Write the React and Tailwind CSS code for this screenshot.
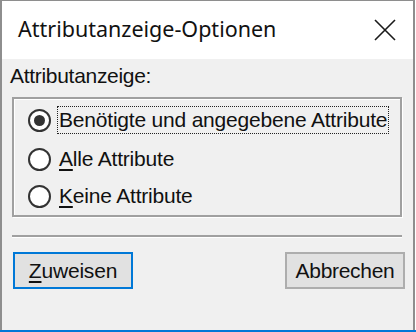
export default function App() {
  return (
    <div className="w-[416px] h-[332px] bg-white flex flex-col" style={{ fontFamily: '"Liberation Sans", Arial, sans-serif' }}>
      <div className="w-[415px] h-[330px] border-l-2 border-r-2 border-t border-[#8e8e8e] flex flex-col">
        {/* Title bar */}
        <div className="h-[58px] bg-white flex items-center justify-between pl-[16px] pr-[16px]">
          <span className="text-[21.5px] text-[#111] pb-[2px]" style={{ fontFamily: '"Noto Sans", "Open Sans", sans-serif' }}>
            Attributanzeige-Optionen
          </span>
          <svg width="22" height="22" viewBox="0 0 22 22" className="mr-[1px] mb-[1px]">
            <path d="M1 1 L21 21 M21 1 L1 21" stroke="#1a1a1a" strokeWidth="1.6" />
          </svg>
        </div>

        {/* Content */}
        <div className="flex-1 bg-[#f0f0f0] flex flex-col pl-[8px] pr-[8px]">
          <div className="mt-[6px] text-[21px] leading-[22px] text-[#111] tracking-[-0.3px]">Attributanzeige:</div>

          <div className="ml-[2px] mt-[10px] w-[390px] h-[120px] border-2 border-[#a0a0a0] shadow-[inset_1px_1px_0_#fff,1px_1px_0_#fff] flex flex-col pl-[14px]">
            <div className="flex items-center h-[30px] mt-[6px]">
              <Radio checked />
              <span className="ml-[6px] px-[1px] border border-dotted border-[#222] text-[21px] leading-[26px] text-[#111] tracking-[-0.2px]">
                Benötigte und angegebene Attribute
              </span>
            </div>
            <div className="flex items-center h-[30px] mt-[9px]">
              <Radio />
              <span className="ml-[8px] text-[21px] text-[#111] tracking-[-0.2px]">
                <span className="underline underline-offset-[3px]">A</span>lle Attribute
              </span>
            </div>
            <div className="flex items-center h-[30px] mt-[7px]">
              <Radio />
              <span className="ml-[8px] text-[21px] text-[#111] tracking-[-0.2px]">
                <span className="underline underline-offset-[3px]">K</span>eine Attribute
              </span>
            </div>
          </div>

          <div className="ml-[2px] mt-[18px] w-[390px] h-[2px] bg-[#a0a0a0] shadow-[0_1px_0_#fff]" />

          <div className="mt-[15px] flex justify-between ml-[3px] mr-[0px]">
            <button className="w-[120px] h-[37px] border-2 border-[#0078d7] bg-[#e1e1e1] text-[21px] text-[#111] tracking-[-0.2px]">
              <span className="underline underline-offset-[3px]">Z</span>uweisen
            </button>
            <button className="w-[120px] h-[37px] border-2 border-[#adadad] bg-[#e1e1e1] text-[21px] text-[#111] tracking-[-0.3px]">
              Abbrechen
            </button>
          </div>
        </div>
      </div>
      <div className="w-[416px] h-[2px] bg-[#0078d7]" />
    </div>
  );
}

function Radio({ checked }) {
  return (
    <div className="w-[23px] h-[23px] rounded-full border-2 border-[#333] bg-white flex items-center justify-center shrink-0">
      {checked && <div className="w-[11px] h-[11px] rounded-full bg-[#333]" />}
    </div>
  );
}
